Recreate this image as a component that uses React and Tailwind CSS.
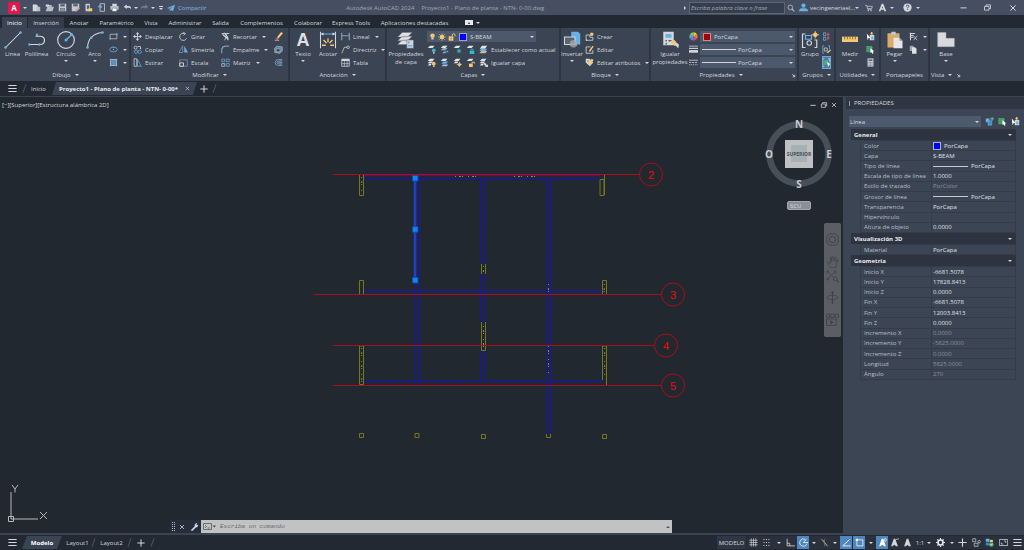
import React from 'react';

// Shared stroke colours: light grey, accent blue, amber
const L = '#d3d7dd';
const B = '#68b1e6';
const Y = '#f4c973';

// --- ICONS (all on a 12x12 grid) ---
const ICONS = {
  newFile: <><path d="M1 2h5l2 2v7H1z" fill={L} /><path d="M6 5h5v6H6z" fill="#b9bec6" /></>,
  open: <><path d="M1 2h4l1 1h3v2H1z" fill={L} /><path d="M3 5h9l-2 6H1z" fill="#b9bec6" /></>,
  save: <><path d="M1 1h10v10H1z" fill="#c4c8cf" /><path d="M3 1.500h6v3H3zM3 6.500h6v4H3z" fill="#59616f" /><path d="M4 8h4M4 9.500h4" stroke={L} strokeWidth=".8" /></>,
  saveAs: <><path d="M1 1h10v7l-3 3H1z" fill="#c4c8cf" /><path d="M3 1.500h6v3H3z" fill="#59616f" /><path d="M5 11l5-5 2 1-4 4z" fill="#d98b8f" /></>,
  webOpen: <><path d="M2 1h6v10H2z" fill="#c4c8cf" /><path d="M4 3h3v5H4z" fill="#59616f" /><path d="M6 7h5v4H6z" fill={Y} /></>,
  webSave: <><path d="M4 1h6v10H4z" fill="none" stroke={L} /><path d="M1 5h5M4 3l2 2-2 2" fill="none" stroke={B} strokeWidth="1.500" /></>,
  print: <><path d="M3 1h6v3H3z" fill={L} /><path d="M.500 4h11v5H.500z" fill="#b9bec6" /><path d="M3 7h6v4H3z" fill="#fff" stroke="#59616f" strokeWidth=".6" /></>,
  undo: <path d="M5 2L1 5l4 3V6.200h3.500q1.500.3 2 2.300Q11.500 4 7.500 3.900H5z" fill={L} />,
  redo: <path d="M7 2l4 3-4 3V6.200H3.500Q2 6.500 1.500 8.500.500 4 4.500 3.900H7z" fill="#747d8d" />,
  plane: <path d="M0 6l12-5-3 10-3-2-2 2V7.500L9 4 2.500 7z" fill={B} />,
  search: <><circle cx="5" cy="5" r="3.500" fill="none" stroke="#b9bec6" strokeWidth="1.200" /><path d="M7.500 7.500L11 11" stroke="#b9bec6" strokeWidth="1.600" /></>,
  user: <><circle cx="6" cy="3.500" r="2.800" fill={B} /><path d="M0 11q0-4 4-4h4q4 0 4 4z" fill={B} /></>,
  cart: <><path d="M0 2h2.500l1.500 6h6M3 3.500h8L10 7H4" fill="none" stroke={L} /><circle cx="5" cy="10" r="1" fill={L} /><circle cx="9" cy="10" r="1" fill={L} /></>,
  autodesk: <path d="M1 11L5 1h2l4 10H8.500L6 4.500 5 7h2.500v2H4l-.8 2z" fill={L} />,
  help: <><circle cx="6" cy="6" r="5.500" fill={L} /><path d="M4.300 4.700q0-1.900 1.800-1.900t1.800 1.600Q7.800 5.500 6.200 6v1.300M6.200 8.300v1.200" fill="none" stroke="#464f61" strokeWidth="1.300" /></>,
  minimize: <path d="M2 6.500h8" stroke={L} strokeWidth="1.300" />,
  restore: <path d="M2 4.500h6v5H2zM4 4.500v-2h6v5H8" fill="none" stroke={L} strokeWidth="1.100" />,
  close: <path d="M2 2l8 8M10 2l-8 8" stroke={L} strokeWidth="1.500" />,
  plus: <path d="M6 .500v11M.500 6h11" stroke={L} strokeWidth="1.500" />,
  menu: <path d="M.500 2h11M.500 6h11M.500 10h11" stroke={L} strokeWidth="1.500" />,
  line: <><path d="M1 11L11 1" stroke={L} strokeWidth=".7" /><circle cx="1" cy="11" r=".9" fill={B} /><circle cx="11" cy="1" r=".9" fill={B} /></>,
  polyline: <><path d="M1 9h7q3 0 3-2.800T7.500 3.500H5" fill="none" stroke={L} strokeWidth=".8" /><circle cx="1" cy="9" r=".8" fill={B} /><circle cx="7.500" cy="9" r=".8" fill={B} /><circle cx="6" cy="2.500" r=".8" fill={B} /></>,
  circle: <><circle cx="6" cy="6" r="5" fill="none" stroke={L} strokeWidth=".7" /><path d="M6 6l3.200-3" stroke={B} strokeWidth=".8" /><circle cx="6" cy="6" r=".9" fill={B} /><circle cx="9.300" cy="2.700" r=".9" fill={B} /></>,
  arc: <><path d="M1 11Q1.500 2 11 1" fill="none" stroke={L} strokeWidth=".7" /><circle cx="1" cy="11" r=".9" fill={B} /><circle cx="3.500" cy="4.500" r=".9" fill={B} /><circle cx="11" cy="1" r=".9" fill={B} /></>,
  rect: <><path d="M1.500 3h9v6h-9z" fill="none" stroke={L} strokeWidth=".9" /><circle cx="10.500" cy="3" r="1.200" fill={B} /><circle cx="1.500" cy="9" r="1.200" fill={B} /></>,
  ellipse: <><ellipse cx="6" cy="6" rx="5" ry="3.200" fill="none" stroke={B} strokeWidth="1" /><circle cx="6" cy="6" r="1" fill={B} /><circle cx="6" cy="2.800" r=".9" fill={B} /></>,
  hatch: <><path d="M2 2h8v8H2z" fill="#5e87ab" stroke={L} strokeWidth=".9" /><path d="M3 9l6-6M3 6l3-3M6 9l3-3" stroke={B} strokeWidth=".7" /><path d="M1 1h2v2H1zM9 1h2v2H9zM1 9h2v2H1zM9 9h2v2H9z" fill={B} /></>,
  move: <><path d="M6 2v8M2 6h8" stroke={L} strokeWidth="1.100" /><path d="M6 0l2.300 3H3.700zM6 12l2.300-3H3.700zM0 6l3-2.300v4.600zM12 6L9 3.700v4.600z" fill={L} /></>,
  copy: <><circle cx="3.500" cy="3.500" r="2" fill="none" stroke={L} /><circle cx="4" cy="9" r="2.200" fill="none" stroke={B} /><circle cx="9" cy="9" r="2.200" fill="none" stroke={B} /><path d="M6 2h4v3M9 4l1 1 1-1" fill="none" stroke={L} /></>,
  stretch: <><path d="M1.500 1v10H5V1z" fill="none" stroke={L} /><path d="M6 2l5 9H6z" fill="none" stroke={B} /></>,
  rotate: <path d="M10 8.500A4.800 4.800 0 1 1 7.500 2M5.500 0l3 2-2.500 2.500" fill="none" stroke={L} strokeWidth="1.100" />,
  mirror: <><path d="M5 1v9H0z" fill="none" stroke="#8a93a1" /><path d="M7 1v9h5z" fill={B} /></>,
  scale: <><path d="M1 2.500h10V11H1z" fill="none" stroke="#7f95ad" /><path d="M1 6.500h5V11H1z" fill="none" stroke={L} strokeWidth="1.200" /></>,
  trim: <><path d="M1 2h10M8 2L5 11" stroke={L} strokeWidth="1.100" /><path d="M2 3l8 7M4 1l5 6v4" fill="none" stroke={L} strokeWidth="1.400" /></>,
  fillet: <><path d="M1 11V6q0-4.500 5-4.500h5" fill="none" stroke={L} strokeWidth=".9" /><path d="M1 6q0-4.500 5-4.500" fill="none" stroke={B} strokeWidth="1.200" /></>,
  array: <><path d="M1 1.500h4v3.500H1zM7 1.500h4v3.500H7zM7 7.500h4V11H7z" fill="none" stroke={B} strokeWidth=".9" /><path d="M1 7.500h4V11H1z" fill="none" stroke={L} strokeWidth=".9" /></>,
  erase: <><path d="M4 7L9.500 0 12 1.800 6 8.500z" fill={Y} /><path d="M4 7l2 1.500L4.500 10.500 2 9z" fill="#e2575b" /><path d="M1 11h6" stroke={L} /></>,
  explode: <><path d="M1 4l3-2.500 7 1V8L8 11 1 10z" fill="#5d86a6" stroke={L} strokeWidth=".7" /><path d="M3 5h5v4H3z" fill="#3b4453" stroke={L} strokeWidth=".6" /></>,
  offset: <><path d="M11 2H6q-4.500 0-4.500 4T6 10h5M11 6H6" fill="none" stroke={B} /><path d="M11 4H6.500Q4 4.500 4 6t2.500 2H11" fill="none" stroke={L} strokeWidth=".8" /></>,
  dimension: <><path d="M1 .500v11M11 .500v11" stroke={L} strokeWidth=".7" /><path d="M1 2h10" stroke={B} strokeWidth=".7" /><path d="M1 2l2-1v2zM11 2L9 1v2z" fill={L} /><path d="M6 5v2.500M3 6l2 2M9 6L7 8M2 9.500h2.500M10 9.500H7.500" stroke={Y} strokeWidth=".9" /></>,
  linear: <><path d="M1 1v10M11 1v10" stroke={L} strokeWidth=".9" /><path d="M1 5h10" stroke={B} strokeWidth="1.200" /></>,
  leader: <><path d="M1 11L4.500 3H8" fill="none" stroke={L} /><circle cx="9.500" cy="3" r="1.700" fill="none" stroke={L} /></>,
  table: <><path d="M1 1.500h10v9.500H1z" fill="none" stroke={L} /><path d="M1 1.500h10V4H1z" fill={L} /><path d="M1 7.500h10M4.500 4v7M8 4v7" stroke={L} strokeWidth=".8" /></>,
  layerProps: <><path d="M3.500 1h6.500L7 4H.500zM3.500 3.500h6.500L7 6.500H.500zM3.500 6h6.500L7 9H.500z" fill="#e0e2e5" stroke="#6b7380" strokeWidth=".3" /><path d="M6.500 6H11v5.500H6.500z" fill="#cfd4da" stroke="#59616f" strokeWidth=".3" /><path d="M7.200 7h1.300v1.300H7.200zM7.200 9.300h3v1h-3z" fill={B} /></>,
  bulb: <><circle cx="6" cy="4.500" r="3.800" fill={Y} /><path d="M4 8h4v3H4z" fill="#d8d5c8" /></>,
  sun: <><circle cx="6" cy="6" r="3.300" fill={Y} /><path d="M6 0v12M0 6h12M1.800 1.800l8.400 8.400M10.200 1.800l-8.400 8.400" stroke={Y} strokeWidth=".9" /></>,
  unlock: <><path d="M1 5h7v6.500H1z" fill={Y} /><path d="M6.500 5V3q0-2 2-2t2 2v2" fill="none" stroke={Y} strokeWidth="1.300" /><path d="M4 7h1.300v2.500H4z" fill="#59616f" /></>,
  layerOff: <><path d="M4 1h6L7.500 4H1z" fill="#e0e2e5" /><circle cx="9" cy="7" r="2.500" fill="#38b9c9" /><path d="M8 9.500h2v2H8z" fill={L} /></>,
  layerIso: <><path d="M4 1h6L7.500 4H1z" fill="#e0e2e5" /><path d="M4 4h6L7.500 7H1z" fill="#9ba7b5" /><path d="M5 8.500h4L7.500 11H3zM9 7.500h2v2H9z" fill={B} /></>,
  layerFreeze: <><path d="M4 1h6L7.500 4H1z" fill="#e0e2e5" /><path d="M8 5v6M5 8h6M6 6l4 4M10 6l-4 4" stroke="#38b9c9" strokeWidth="1.100" /></>,
  layerLock: <><path d="M4 1h6L7.500 4H1z" fill="#e0e2e5" /><path d="M5 7.500h6V12H5z" fill="#38b9c9" /><path d="M6.500 7.500V5.500h3v2" fill="none" stroke="#38b9c9" /></>,
  layerCurrent: <><path d="M4 1h7L8 5H1z" fill="#e0e2e5" /><path d="M3 5h8L8.500 8H.500z" fill={B} /><path d="M3 8h8l-2.500 3H.500z" fill="#d1b990" /></>,
  layerOn: <><path d="M4 1h6L7.500 4H1zM3 4.500h5L6 7H1zM3 7.500h3L5 10H1z" fill="#e0e2e5" /><circle cx="9" cy="7.500" r="2.500" fill={Y} /><path d="M8 10h2v2H8z" fill={Y} /></>,
  layerUniso: <><path d="M4 1h6L7.500 4H1z" fill="#e0e2e5" /><path d="M4 4.500h7L8.500 7.500H2z" fill={B} /><path d="M4 8.500h7L9 11H2z" fill="#9fc4e0" /></>,
  layerThaw: <><path d="M4 1h6L7.500 4H1zM3 4.500h4L6 7H1z" fill="#e0e2e5" /><circle cx="8.500" cy="8.500" r="2" fill={Y} /><path d="M8.500 5v7M5 8.500h7" stroke={Y} strokeWidth=".9" /></>,
  layerUnlock: <><path d="M4 1h6L7.500 4H1z" fill="#e0e2e5" /><path d="M4 7.500h5V12H4z" fill={Y} /><path d="M8 7.500v-2h3v2" fill="none" stroke={Y} strokeWidth="1.200" /></>,
  layerMatch: <><path d="M4 1h6L7.500 4H1zM3 4.500h5L6 7H1zM3 7.500h4L5 10H1z" fill="#e0e2e5" /><path d="M6 7l2-1 2 3h2v3H9z" fill={L} /><path d="M9 9l3 3" stroke={Y} /></>,
  insert: <><path d="M5.500.500h4.500l1.500 1.500v7H5.500z" fill={B} /><path d="M1 4h7v5H1z" fill="#5b6472" stroke={L} strokeWidth=".7" /><circle cx="7" cy="8.500" r="2.500" fill="#a5a9af" opacity=".8" /></>,
  blockNew: <><path d="M1.500 4h5v3h4v4h-9z" fill="none" stroke={L} strokeWidth="1.100" /><circle cx="9" cy="3" r="2.300" fill={Y} /><circle cx="2" cy="11" r="1" fill={L} /></>,
  blockEdit: <><path d="M1.500 2.500h6M1.500 2.500v8.500h9V7" fill="none" stroke={L} strokeWidth="1.100" /><path d="M5 8l5-7 1.500 1L7 9z" fill={Y} /></>,
  attrEdit: <><path d="M1 1h5l5 5-4.500 5L1 6z" fill={L} /><path d="M4 7l5-6 2.500 1.500L7 9z" fill={Y} /><circle cx="4" cy="4" r="1" fill="#d9484f" /></>,
  matchProps: <><path d="M1.500.500h7v9h-7z" fill="#d4d7db" /><path d="M3 2h4v2.500H3z" fill={B} /><path d="M3 6h1v1H3zM5 6h2v1H5zM3 8h1v1H3z" fill="#59616f" /><path d="M6 7l3 3 2-1.500L9 6z" fill={Y} /><path d="M9 9l2.500 2.500L12 9l-1.500-1z" fill={L} /></>,
  wheel: <><path d="M6 6V.500A5.500 5.500 0 0 1 10.800 3.300z" fill="#f5c33b" /><path d="M6 6l4.800-2.700A5.500 5.500 0 0 1 10.800 8.700z" fill="#ef7a3a" /><path d="M6 6l4.800 2.700A5.500 5.500 0 0 1 6 11.500z" fill="#e0468f" /><path d="M6 6v5.500A5.500 5.500 0 0 1 1.200 8.700z" fill="#8e6ce0" /><path d="M6 6L1.200 8.700A5.500 5.500 0 0 1 1.200 3.300z" fill="#3fb5e0" /><path d="M6 6L1.200 3.300A5.500 5.500 0 0 1 6 .500z" fill="#7fce55" /></>,
  weights: <><path d="M0 1.500h12" stroke={L} /><path d="M0 4.500h12" stroke={L} strokeWidth="1.500" /><path d="M0 8.500h12" stroke={L} strokeWidth="3.500" /></>,
  ltypes: <><path d="M0 3h12" stroke={L} /><path d="M0 6h12" stroke={L} strokeDasharray="3 1" /><path d="M0 9h12" stroke={L} strokeDasharray="1.500 1" /></>,
  group: <><path d="M3 2H1v9h2M9 6h1.500v5H9" fill="none" stroke={L} strokeWidth=".8" /><path d="M3 3h4v2.500H3z" fill="none" stroke={B} strokeWidth=".8" /><circle cx="5.500" cy="8" r="1.500" fill="none" stroke={L} strokeWidth=".7" /><circle cx="9.500" cy="2.500" r="1.500" fill={Y} /><path d="M9.500 0v5M7 2.500h5" stroke={Y} strokeWidth=".6" /></>,
  ungroup: <><path d="M2 1h3v4H2zM2 7h3v4H2z" fill="none" stroke={B} /><path d="M8 1v10M7 3h3M7 8h3" stroke="#e2575b" strokeWidth="1.300" /></>,
  groupEdit: <><path d="M3 1H1v10h2M8 1h2v5" fill="none" stroke={B} /><path d="M3 4h4v4H3z" fill="none" stroke={L} /><path d="M6 10l5-4 1 1-4 4z" fill={Y} /></>,
  groupSel: <><path d="M3 1H1v10h2M8 1h2v4" fill="none" stroke={L} /><path d="M3 3h5v6H3z" fill="#4bb475" /><path d="M7 5l5 4H9.500L8 12z" fill="#fff" /></>,
  measure: <><path d="M0 3.500h12v4H0z" fill={Y} /><path d="M2 3.500v2M4 3.500v2M6 3.500v2M8 3.500v2M10 3.500v2" stroke="#6f5b2a" strokeWidth=".6" /></>,
  quickSel: <><path d="M5 4h6v7H5z" fill={L} /><path d="M1 2l5 6H3.500L2 11z" fill="#fff" /><path d="M7 0L5.500 3h2L6 6l4-4H8l1-2z" fill={Y} /><path d="M7 6h3v4H7z" fill={B} /></>,
  selAll: <><path d="M1 2h7v7H1z" fill="#3f9a66" stroke="#6ad08f" strokeDasharray="1.500 1" /><path d="M6 4l5 4.500H9L10 11l-1.500.5-1-2L6 10.500z" fill="#fff" /></>,
  calc: <><path d="M2 .500h8v11H2z" fill="#c4c8cf" /><path d="M3.500 2h5v2h-5z" fill="#59616f" /><path d="M3.500 6h5M3.500 8h5M3.500 10h5" stroke="#59616f" strokeDasharray="1 1" /></>,
  paste: <><path d="M1 1.500h8V11H1z" fill="#d9ac68" /><path d="M3.500.500h3v2h-3z" fill="#c4c8cf" /><path d="M5 4.500h4l2 2v5H5z" fill="#e5e6e8" /><path d="M9 4.500v2h2" fill="#8a93a1" /></>,
  cutTxt: <><path d="M1 2h7M1 4.500h5M1 7h5M2 1v10" stroke={L} strokeWidth="1.300" /><path d="M6 5l5 6M11 5l-5 6" stroke={L} /></>,
  copyClip: <><path d="M1 1h5v7H1z" fill="#9ba3af" /><path d="M4 3h4l2 2v6.500H4z" fill="#dfe1e4" /></>,
  base: <path d="M1 1.500h5V5h5v5H1z" fill="#d9dadd" stroke="#a9adb4" strokeWidth=".3" />,
  wrench: <path d="M1 11l5-5q-.500-3 2-4.500L10 1 8.500 3l.7 1L11 3.500q0 3-3.500 4L3 12z" fill={L} />,
  addSel: <><path d="M1 2h5v5H1z" fill={B} /><path d="M4 5h5v6H4z" fill="#4a8fc8" stroke={B} strokeWidth=".7" /><path d="M9.500 0v5M7 2.500h5" stroke="#63c77d" strokeWidth="1.300" /></>,
  grid: <path d="M3 .500v11M6 .500v11M9 .500v11M.500 3h11M.500 6h11M.500 9h11" stroke={L} strokeWidth=".9" />,
  dots: <path d="M2 2h8M2 6h8M2 10h8" stroke={L} strokeWidth="1.300" strokeDasharray="1.300 2" />,
  ortho: <path d="M1.500 1v9.500H12M1.500 7h3.500v3.500" fill="none" stroke={L} strokeWidth="1.100" />,
  polar: <><path d="M10.500 7.500A4.800 4.800 0 1 1 8 1.700" fill="none" stroke="#fff" /><path d="M6 6h6M6 6l4-5" stroke="#fff" /></>,
  iso: <><path d="M3 2l7 9" stroke={L} strokeWidth="1.100" /><path d="M6 1v10" stroke="#58a06a" strokeWidth=".8" /><path d="M1 1l5 6" stroke="#c85a5a" strokeWidth=".9" /></>,
  angle: <path d="M11.500 10.500H1L10 2" fill="none" stroke="#fff" strokeWidth="1.100" />,
  osnap: <><path d="M2.500 2.500h8v8h-8z" fill="none" stroke="#fff" /><path d="M1 1h3v3H1z" fill="#fff" /></>,
  anno: <><path d="M5 1h2l3.500 10H8L6 9l-3 2H1.500z" fill={L} /><path d="M8 2l4-1" stroke={L} /></>,
  annoScale: <path d="M5 1h2l3.500 10H8L6 9l-2 2H1.500z" fill={L} />,
  annoOn: <><path d="M5 1h2l3.500 10H8L6 9l-3 2H1.500z" fill="#fff" /><circle cx="9.500" cy="2.500" r="1.700" fill="none" stroke="#fff" /></>,
  gear: <><circle cx="6" cy="6" r="3.300" fill="none" stroke="#e6e8eb" strokeWidth="2.200" /><path d="M6 0v2.500M6 9.500V12M0 6h2.500M9.500 6H12M1.800 1.800l1.700 1.700M8.500 8.500l1.700 1.700M10.200 1.800L8.500 3.500M3.500 8.500l-1.700 1.700" stroke="#e6e8eb" strokeWidth="1.600" /></>,
  isolate: <><path d="M1 1h4v4H1zM3 7h5v4H3z" fill="none" stroke={L} strokeWidth=".9" /><circle cx="9.500" cy="5" r="1.700" fill="none" stroke={L} strokeWidth=".9" /></>,
  perf: <><path d="M1 1h5v4H1z" fill={B} /><path d="M1 6h5v4H1z" fill="#3f7fd0" /><path d="M6.500 2.500h4v3h-4z" fill={Y} /><circle cx="8.500" cy="8.500" r="3" fill="#4fae62" /><path d="M7 8.500l1.200 1.200L10 7.500" fill="none" stroke="#fff" /></>,
  clean: <><path d="M.500 2h11v8H.500z" fill="none" stroke={L} /><path d="M6.500 4H9v2.500M5.500 8H3V6" fill="none" stroke={L} /></>,
  navWheel: <><rect x=".700" y=".700" width="10.600" height="10.600" rx="4" fill="none" stroke="#3d4147" strokeWidth=".7" /><circle cx="6" cy="6" r="3" fill="none" stroke="#3d4147" strokeWidth=".8" /></>,
  hand: <path d="M4 11.500L1 7l1-.700L4 8V2.500h1V6l.500-4.500h1L7 6l1-4h1v4.500L10.500 4l1 .500L9.500 9v2.500z" fill="none" stroke="#3d4147" strokeWidth=".6" />,
  zoomExt: <><path d="M1 1l6 6M9 1L1 9M1 3V1h2M9 3V1H7M1 7v2h2" fill="none" stroke="#3d4147" strokeWidth=".7" /><circle cx="8.500" cy="8" r="1.800" fill="none" stroke="#3d4147" strokeWidth=".7" /><path d="M10 9.500l2 2" stroke="#3d4147" /></>,
  orbit: <><ellipse cx="6" cy="6" rx="5" ry="2" fill="none" stroke="#3d4147" strokeWidth=".7" /><path d="M6 .500v11M4.800 2L6 .500 7.200 2M4.800 10L6 11.500 7.200 10" fill="none" stroke="#3d4147" strokeWidth=".8" /></>,
  motion: <><path d="M.500 1h3v3h-3zM4.500 1h3v3h-3zM8.500 1h3v3h-3zM.500 5.500h9v6h-9z" fill="none" stroke="#3d4147" strokeWidth=".7" /><path d="M4 6.500l3 2-3 2z" fill="#3d4147" /></>,
  launcher: <path d="M3 3l5 5M9 4v5H4" fill="none" stroke={L} strokeWidth="2" />,
};

function Icon({ name, className = 'size-[9px]' }) {
  return (
    <svg viewBox="0 0 12 12" className={`shrink-0 ${className}`} aria-hidden="true">
      {ICONS[name]}
    </svg>
  );
}

function Caret({ className = '' }) {
  return (
    <svg viewBox="0 0 4 2" className={`h-[2px] w-[4px] shrink-0 ${className}`} aria-hidden="true">
      <path d="M0 0h4L2 2z" fill="#d3d7dd" />
    </svg>
  );
}

// --- TITLE BAR ---
const QUICK = ['newFile', 'open', 'save', 'saveAs', 'webOpen', 'webSave', 'print', 'undo'];

function TitleBar() {
  return (
    <header className="flex h-[15px] items-center justify-between bg-[#464f61]">
      <div className="flex items-center">
        <button aria-label="AutoCAD" className="ml-[8px] grid size-[12px] place-items-center rounded-[1px] bg-[#e4174b] text-[8px] leading-none font-bold text-white">A</button>
        <Caret className="mr-[3px] ml-[3px]" />
        {QUICK.map((name) => (
          <button key={name} aria-label={name} className="grid w-[13px] place-items-center"><Icon name={name} /></button>
        ))}
        <Caret />
        <button aria-label="redo" className="ml-px grid w-[11px] place-items-center"><Icon name="redo" /></button>
        <Caret className="ml-px" />
        <button aria-label="Personalizar" className="mx-[4px] border-t border-[#d3d7dd] pt-[1px]"><Caret /></button>
        <button className="flex items-center gap-[3px] text-[#77b9e8]"><Icon name="plane" className="size-[8px]" />Compartir</button>
      </div>
      <h1 className="flex gap-[7px] text-[#a0a7b4]">
        <span>Autodesk AutoCAD 2024</span>
        <span>Proyecto1 - Plano de planta - NTN- 0-00.dwg</span>
      </h1>
      <div className="flex items-center">
        <span className="h-0 w-0 border-y-2 border-l-2 border-y-transparent border-l-[#d3d7dd]" />
        <input aria-label="Buscar" placeholder="Escriba palabra clave o frase" className="ml-[3px] h-[12px] w-[96px] border border-[#5d6678] bg-[#353e4d] px-[1px] italic outline-none placeholder:text-[#a2a9b5]" />
        <button aria-label="Buscar" className="ml-[2px]"><Icon name="search" className="size-[8px]" /></button>
        <button className="ml-[4px] flex items-center gap-[2px]"><Icon name="user" /><span className="w-[43px] text-left">vecingeneriael...</span><Caret /></button>
        <button aria-label="Tienda" className="ml-[6px]"><Icon name="cart" className="size-[8px]" /></button>
        <button aria-label="Autodesk" className="ml-[5px] flex items-center gap-[3px]"><Icon name="autodesk" /><Caret /></button>
        <button aria-label="Ayuda" className="ml-[9px] flex items-center gap-[4px]"><Icon name="help" /><Caret /></button>
        <button aria-label="Minimizar" className="ml-[39px]"><Icon name="minimize" /></button>
        <button aria-label="Restaurar" className="ml-[15px]"><Icon name="restore" /></button>
        <button aria-label="Cerrar" className="mr-[7px] ml-[17px]"><Icon name="close" className="size-[8px]" /></button>
      </div>
    </header>
  );
}

// --- RIBBON TABS ---
const TABS = [
  ['Inicio', 'w-[25px] bg-[#3b4453] text-white mr-px'],
  ['Inserción', 'w-[36px] bg-[#343c4a]'],
  ['Anotar', 'w-[30px]'],
  ['Paramétrico', 'w-[45px]'],
  ['Vista', 'w-[24px]'],
  ['Administrar', 'w-[44px]'],
  ['Salida', 'w-[27px]'],
  ['Complementos', 'w-[55px]'],
  ['Colaborar', 'w-[38px]'],
  ['Express Tools', 'w-[48px]'],
  ['Aplicaciones destacadas', 'w-[79px]'],
];

function RibbonTabs() {
  return (
    <nav className="flex h-[13px] items-end pl-[2px]">
      {TABS.map(([label, cls]) => (
        <button key={label} className={`h-[11px] shrink-0 whitespace-nowrap ${cls}`}>{label}</button>
      ))}
      <button aria-label="Minimizar cinta" className="ml-[11px] flex h-[11px] items-center gap-[3px]">
        <span className="grid h-[5px] w-[8px] place-items-center bg-[#e6e8eb]"><span className="h-0 w-0 border-x border-b-2 border-x-transparent border-b-[#222933]" /></span>
        <Caret />
      </button>
    </nav>
  );
}

// --- RIBBON BUILDING BLOCKS ---
function Panel({ title, width, launcher, noCaret, children }) {
  return (
    <section className={`flex shrink-0 flex-col border-r-2 border-[#2e3643] pt-[2px] ${width}`}>
      <div className="flex h-[39px]">{children}</div>
      <div className="flex h-[12px] items-center">
        <h2 className="flex flex-1 items-center justify-center gap-[4px]">{title}{!noCaret && <Caret />}</h2>
        {launcher && <button aria-label={`${title}: opciones`} className="mr-px"><Icon name="launcher" className="size-[5px]" /></button>}
      </div>
    </section>
  );
}

function Big({ icon, label, width, caret, iconClass = 'size-[18px]' }) {
  return (
    <button className={`flex shrink-0 flex-col items-center ${width}`}>
      <span className="grid h-[20px] place-items-center">
        {icon === 'A' ? <span className="font-['Liberation_Sans',sans-serif] text-[18px] leading-[20px] font-bold text-[#dfe1e4]">A</span> : <Icon name={icon} className={iconClass} />}
      </span>
      <span className="text-center leading-[8px] whitespace-pre">{label}</span>
      {caret && <Caret className="mt-[2px]" />}
    </button>
  );
}

function Small({ icon, label, caret, active }) {
  return (
    <button aria-label={label ? undefined : icon} className={`flex h-[13px] items-center gap-[3px] whitespace-nowrap ${active ? 'bg-[#4a7ba6] outline -outline-offset-1 outline-[#6fa6d2]' : ''}`}>
      <Icon name={icon} />
      {label}
      {caret && <Caret className="ml-[2px]" />}
    </button>
  );
}

function Combo({ label, options, pad, width, children }) {
  return (
    <div className={`relative ${width}`}>
      <select aria-label={label} className={`block h-[11px] w-full appearance-none bg-[#4c586c] outline-none ${pad}`}>
        {options.map((o) => <option key={o}>{o}</option>)}
      </select>
      <span className="pointer-events-none absolute inset-y-0 left-[2px] flex items-center gap-[2px]">{children}</span>
      <Caret className="pointer-events-none absolute top-[5px] right-[2px]" />
    </div>
  );
}

function Ribbon() {
  return (
    <div className="flex h-[53px] overflow-hidden bg-[#3b4453] pl-[2px]">
      <Panel title="Dibujo" width="w-[129px]">
        <Big icon="line" label="Línea" width="w-[21px]" />
        <Big icon="polyline" label="Polilínea" width="w-[27px]" />
        <Big icon="circle" label="Círculo" width="w-[32px]" caret iconClass="size-[20px]" />
        <Big icon="arc" label="Arco" width="w-[25px]" caret />
        <div className="ml-[2px]">
          <Small icon="rect" caret />
          <Small icon="ellipse" caret />
          <Small icon="hatch" caret />
        </div>
      </Panel>
      <Panel title="Modificar" width="w-[159px]">
        <div className="ml-[2px] w-[46px]">
          <Small icon="move" label="Desplazar" />
          <Small icon="copy" label="Copiar" />
          <Small icon="stretch" label="Estirar" />
        </div>
        <div className="w-[42px]">
          <Small icon="rotate" label="Girar" />
          <Small icon="mirror" label="Simetría" />
          <Small icon="scale" label="Escala" />
        </div>
        <div className="w-[53px]">
          <Small icon="trim" label="Recortar" caret />
          <Small icon="fillet" label="Empalme" caret />
          <Small icon="array" label="Matriz" caret />
        </div>
        <div>
          <Small icon="erase" />
          <Small icon="explode" />
          <Small icon="offset" />
        </div>
      </Panel>
      <Panel title="Anotación" width="w-[97px]">
        <Big icon="A" label="Texto" width="w-[26px]" caret />
        <Big icon="dimension" label="Acotar" width="w-[24px]" />
        <div className="ml-[1px]">
          <Small icon="linear" label="Lineal" caret />
          <Small icon="leader" label="Directriz" caret />
          <Small icon="table" label="Tabla" />
        </div>
      </Panel>
      <Panel title="Capas" width="w-[174px]">
        <Big icon="layerProps" label={'Propiedades\nde capa'} width="w-[38px]" />
        <div className="ml-[2px]">
          <div className="flex h-[13px] items-center">
            <Combo label="Capa actual" options={['S-BEAM', '0', 'S-COLS']} pad="pl-[43px]" width="w-[109px]">
              <Icon name="bulb" className="size-[7px]" />
              <Icon name="sun" className="size-[8px]" />
              <Icon name="unlock" className="size-[8px]" />
              <span className="ml-px size-[8px] border border-[#9aa2c8] bg-[#0000ff]" />
            </Combo>
          </div>
          <div className="flex gap-[4px]">
            <Small icon="layerOff" /><Small icon="layerIso" /><Small icon="layerFreeze" /><Small icon="layerLock" />
            <Small icon="layerCurrent" label="Establecer como actual" />
          </div>
          <div className="flex gap-[4px]">
            <Small icon="layerOn" /><Small icon="layerUniso" /><Small icon="layerThaw" /><Small icon="layerUnlock" />
            <Small icon="layerMatch" label="Igualar capa" />
          </div>
        </div>
      </Panel>
      <Panel title="Bloque" width="w-[90px]">
        <Big icon="insert" label="Insertar" width="w-[22px]" caret />
        <div className="ml-[2px]">
          <Small icon="blockNew" label="Crear" />
          <Small icon="blockEdit" label="Editar" />
          <Small icon="attrEdit" label="Editar atributos" caret />
        </div>
      </Panel>
      <Panel title="Propiedades" width="w-[148px]" launcher>
        <Big icon="matchProps" label={'Igualar\npropiedades'} width="w-[38px]" />
        <div className="mr-[2px]">
          <Small icon="wheel" />
          <Small icon="weights" />
          <Small icon="ltypes" />
        </div>
        <div className="flex flex-col gap-[2px] pt-[1px]">
          <Combo label="Color de objeto" options={['PorCapa', 'PorBloque']} pad="pl-[14px]" width="w-[95px]">
            <span className="ml-px size-[8px] border border-[#c98a8f] bg-[#a80000]" />
          </Combo>
          <Combo label="Grosor de línea" options={['PorCapa', 'PorBloque']} pad="pl-[38px]" width="w-[95px]">
            <span className="h-px w-[34px] bg-[#d3d7dd]" />
          </Combo>
          <Combo label="Tipo de línea" options={['PorCapa', 'Continuous']} pad="pl-[38px]" width="w-[95px]">
            <span className="h-px w-[34px] bg-[#d3d7dd]" />
          </Combo>
        </div>
      </Panel>
      <Panel title="Grupos" width="w-[37px]">
        <Big icon="group" label="Grupo" width="w-[22px]" />
        <div className="ml-[1px]">
          <Small icon="ungroup" />
          <Small icon="groupEdit" />
          <Small icon="groupSel" active />
        </div>
      </Panel>
      <Panel title="Utilidades" width="w-[45px]">
        <Big icon="measure" label="Medir" width="w-[28px]" caret iconClass="size-[16px]" />
        <div className="ml-[2px]">
          <Small icon="quickSel" />
          <Small icon="selAll" />
          <Small icon="calc" />
        </div>
      </Panel>
      <Panel title="Portapapeles" width="w-[49px]" noCaret>
        <Big icon="paste" label="Pegar" width="w-[27px]" caret />
        <div className="ml-px">
          <Small icon="cutTxt" caret />
          <Small icon="copyClip" caret />
        </div>
      </Panel>
      <section className="flex w-[34px] flex-col pt-[2px]">
        <div className="flex h-[39px]"><Big icon="base" label="Base" width="w-[32px]" caret iconClass="size-[20px]" /></div>
        <div className="flex h-[12px] items-center gap-[4px] pl-[1px]"><h2>Vista</h2><Caret /><button aria-label="Vista: opciones"><Icon name="launcher" className="size-[5px]" /></button></div>
      </section>
    </div>
  );
}

// --- TABS FOR FILES AND LAYOUTS ---
function Slash() {
  return <span className="h-[9px] w-px shrink-0 rotate-[20deg] bg-[#4a5363]" />;
}

function FileTabs() {
  return (
    <nav className="flex h-[15px] items-center">
      <button aria-label="Menú de archivos" className="ml-[8px]"><Icon name="menu" /></button>
      <span className="w-[7px]" /><Slash />
      <button className="w-[27px]">Inicio</button>
      <div className="flex h-[13px] items-center bg-[#3b4453] pr-[4px] pl-[7px] [clip-path:polygon(4px_0,100%_0,calc(100%-4px)_100%,0_100%)]">
        <button className="w-[124px] text-left font-bold whitespace-nowrap text-[#e8eaed]">Proyecto1 - Plano de planta - NTN- 0-00*</button>
        <button aria-label="Cerrar pestaña" className="ml-[2px] pr-[3px]"><Icon name="close" className="size-[5px]" /></button>
      </div>
      <button aria-label="Nuevo dibujo" className="mr-[6px] ml-[3px]"><Icon name="plus" className="size-[8px]" /></button>
      <Slash />
    </nav>
  );
}

// --- DRAWING ---
const AXES = [
  { n: '2', y: 174.5, x1: 333, cx: 651 },
  { n: '3', y: 294.5, x1: 314, cx: 673 },
  { n: '4', y: 345.5, x1: 333, cx: 666 },
  { n: '5', y: 385.5, x1: 333, cx: 673 },
];

function Plan() {
  return (
    <svg viewBox="0 97 843 436" className="absolute inset-0 h-full w-full" role="img" aria-label="Plano de planta">
      {/* beams */}
      <g fill="none" stroke="#1414b8" strokeWidth="1" shapeRendering="crispEdges">
        <path d="M364 178.500H415M419 178.500H481.500M485.500 178.500H547M551 178.500H600" />
        <path d="M364 290.500H415M419 290.500H481.500M485.500 290.500H547M551 290.500H603" />
        <path d="M364 380.500H415M419 380.500H481.500M485.500 380.500H547M551 380.500H603" />
        <path d="M418.500 178V385M415.500 284V385" />
        <path d="M481.500 178V264M485.500 178V264M481.500 274V322M485.500 274V322M481.500 351V381M485.500 351V381" />
        <path d="M546.500 178V434M550.500 178V434" />
      </g>
      <g fill="none" stroke="#1b1b8a" strokeWidth="1" strokeDasharray="1 4 2 7 1 3">
        <path d="M364 177H600M364 292.300H602M368 382.500H602M420 180V384M483.500 180V380M548.500 180V430" />
      </g>
      <path d="M364 175.500H600" stroke="#5a1070" strokeWidth="1" />
      {/* columns */}
      <g fill="none" stroke="#77771c" strokeWidth="1">
        <path d="M359.500 175v20.500h4V175M359.500 294v-13.500h4V294M359.500 346h4v38.500h-4zM600 179.500h4v16h-4zM604.500 175v20M602.500 294v-13.500h4V294M602.500 380V346h4v39" />
        <path d="M481.500 264v10M485.500 264v10M481.500 322v28.500h4V322" />
        <path d="M359.500 433.500h4v4h-4zM415 433.500h4v4h-4zM481.500 434.500h4v4h-4zM546.500 434v3.500h4V434M602.500 434.500h4v4h-4z" />
        <path d="M361.700 177v16M361.700 348v34M604.700 348v30M604.300 284v8M483.500 326v22M483.500 266v6M548.500 346v30M548.500 284v10M455 176.500h26M514 176.500h24" strokeDasharray="1 3 2 1 1 5" stroke="#8d8d35" />
      </g>
      {/* axes with their bubbles */}
      {AXES.map((a) => (
        <g key={a.n}>
          <path d={`M${a.x1} ${a.y}H${a.cx - 12}`} stroke="#ad0c18" strokeWidth="1" shapeRendering="crispEdges" />
          <circle cx={a.cx} cy={a.y} r="11.500" fill="none" stroke="#ad0c18" />
          <text x={a.cx} y={a.y + 4} textAnchor="middle" fill="#f00a0a" className="font-['Liberation_Sans',sans-serif] text-[11px]">{a.n}</text>
        </g>
      ))}
      {/* selected beam */}
      <path d="M415 178V281" stroke="#1f3fd2" strokeWidth="2.600" />
      <g fill="#0a84ff" stroke="#1a4d8a" strokeWidth=".8">
        <path d="M412.500 175.500h5.500v5.500h-5.500zM412.500 226.700h5.500v5.500h-5.500zM412.500 277.500h5.500v5.500h-5.500z" />
      </g>
    </svg>
  );
}

function ViewCube() {
  return (
    <div className="absolute top-[20px] right-[10px] flex w-[68px] flex-col items-center">
      <svg viewBox="0 0 68 76" className="w-full" role="img" aria-label="Vista superior">
        <circle cx="34" cy="37" r="29.500" fill="none" stroke="#474f59" strokeWidth="6.500" />
        <path d="M20 23h28v28H20z" fill="#bfc0c1" />
        <path d="M26 28h16v17H26z" fill="#a6b1b6" />
        <text x="34" y="39" textAnchor="middle" fill="#4b4f55" className="text-[5px] font-bold">SUPERIOR</text>
        <g fill="#c9ccd1" textAnchor="middle" className="text-[10px] font-bold">
          <text x="34" y="11">N</text>
          <text x="34" y="71">S</text>
          <text x="4" y="41">O</text>
          <text x="64" y="41">E</text>
        </g>
      </svg>
      <button className="mt-[8px] flex h-[9px] w-[24px] items-center rounded-[2px] border border-[#a3a7b0] bg-[#8b8f9a] pl-[2px] text-[#d7d9de]">SCU</button>
    </div>
  );
}

function NavBar() {
  return (
    <div className="absolute top-[126px] right-[2px] flex h-[114px] w-[17px] flex-col items-center rounded-[2px] bg-[#5b5f65] pt-[10px]">
      <button aria-label="Rueda"><Icon name="navWheel" className="size-[13px]" /></button>
      <button aria-label="Encuadre" className="mt-[9px]"><Icon name="hand" className="size-[13px]" /></button>
      <button aria-label="Zoom" className="mt-[2px]"><Icon name="zoomExt" className="size-[13px]" /></button>
      <button aria-label="Órbita" className="mt-[8px]"><Icon name="orbit" className="size-[13px]" /></button>
      <button aria-label="ShowMotion" className="mt-[9px]"><Icon name="motion" className="size-[13px]" /></button>
    </div>
  );
}

function Canvas() {
  return (
    <main className="relative flex-1 overflow-hidden bg-[#212830]">
      <Plan />
      <button className="absolute top-[4px] left-[2px] text-[#d3d7dd]">[−][Superior][Estructura alámbrica 2D]</button>
      <div className="absolute top-[4px] right-[6px] flex items-center gap-[3px]">
        <button aria-label="Minimizar dibujo"><Icon name="minimize" className="size-[8px]" /></button>
        <button aria-label="Restaurar dibujo"><Icon name="restore" className="size-[8px]" /></button>
        <button aria-label="Cerrar dibujo"><Icon name="close" className="size-[6px]" /></button>
      </div>
      <ViewCube />
      <NavBar />
      <svg viewBox="0 0 42 42" className="absolute bottom-[7px] left-[7px] size-[42px]" role="img" aria-label="Ejes X Y">
        <path d="M4 8V35H31M1.500 32.500h5v5h-5zM5 1l3 4 3-4M8 5v3.500M33 28l7 7M40 28l-7 7" fill="none" stroke="#b5b8bd" strokeWidth="1" />
      </svg>
      <form className="absolute bottom-0 left-[170px] flex h-[13px] w-[502px] items-center bg-[#262e3c]">
        <span className="mx-[2px] h-[9px] w-[3px] border-x border-dotted border-[#b5b8bd]" />
        <button type="button" aria-label="Cerrar" className="ml-[2px]"><Icon name="close" className="size-[6px]" /></button>
        <button type="button" aria-label="Personalizar" className="ml-[5px]"><Icon name="wrench" /></button>
        <label className="ml-[2px] flex h-full flex-1 items-center bg-[#c1c2c3] px-[2px]">
          <svg viewBox="0 0 13 7" className="h-[7px] w-[13px]" aria-hidden="true"><path d="M.500.500h8v6h-8zM2 2l1.500 1.500L2 5M4.500 5h2.500" fill="none" stroke="#555a61" strokeWidth=".8" /><path d="M9.500 2.500h3.500l-1.700 2z" fill="#444950" /></svg>
          <input aria-label="Comando" placeholder="Escriba un comando" className="ml-[4px] flex-1 bg-transparent font-['Liberation_Mono',monospace] text-[6px] italic outline-none placeholder:text-[#686b70]" />
          <span className="h-0 w-0 border-x-2 border-b-2 border-x-transparent border-b-[#555a61]" />
        </label>
      </form>
    </main>
  );
}

// --- PROPERTIES PALETTE ---
const GROUPS = [
  {
    title: 'General',
    height: 'h-[93px]',
    rows: [
      ['Color', 'PorCapa', 'swatch'],
      ['Capa', 'S-BEAM'],
      ['Tipo de línea', 'PorCapa', 'line'],
      ['Escala de tipo de línea', '1.0000'],
      ['Estilo de trazado', 'PorColor', 'dim'],
      ['Grosor de línea', 'PorCapa', 'line'],
      ['Transparencia', 'PorCapa'],
      ['Hipervínculo', ''],
      ['Altura de objeto', '0.0000'],
    ],
  },
  { title: 'Visualización 3D', height: 'h-[11px]', rows: [['Material', 'PorCapa']] },
  {
    title: 'Geometría',
    height: 'h-[114px]',
    rows: [
      ['Inicio X', '-6681.5078'],
      ['Inicio Y', '17828.8413'],
      ['Inicio Z', '0.0000'],
      ['Fin X', '-6681.5078'],
      ['Fin Y', '12003.8413'],
      ['Fin Z', '0.0000'],
      ['Incremento X', '0.0000', 'dim'],
      ['Incremento Y', '-5825.0000', 'dim'],
      ['Incremento Z', '0.0000', 'dim'],
      ['Longitud', '5825.0000', 'dim'],
      ['Ángulo', '270', 'dim'],
    ],
  },
];

function PropertyGroup({ title, height, rows }) {
  return (
    <section>
      <button className="flex h-[11px] w-full items-center justify-between bg-[#2e343f] pr-[4px] pl-[3px] font-bold text-[#e8eaed]">{title}<Caret /></button>
      <table className={`ml-[9px] w-[calc(100%-9px)] border-collapse ${height}`}>
        <tbody>
          {rows.map(([label, value, kind]) => (
            <tr key={label} className="border border-[#343c49]">
              <th scope="row" className="w-[71px] border-r border-[#343c49] p-0 pl-[3px] text-left font-normal whitespace-nowrap text-[#b9bfc9]">
                <label htmlFor={`${title}-${label}`}>{label}</label>
              </th>
              <td className="p-0 pl-[1px]">
                <div className="flex h-[8px] items-center">
                  {kind === 'swatch' && <span className="mr-[3px] size-[8px] shrink-0 border border-[#aab0d8] bg-[#0000ff]" />}
                  {kind === 'line' && <span className="mr-[3px] h-px w-[35px] shrink-0 bg-[#c5cad2]" />}
                  <input id={`${title}-${label}`} defaultValue={value} readOnly={kind === 'dim'} className={`h-[8px] w-full min-w-0 bg-transparent outline-none ${kind === 'dim' ? 'text-[#87909e]' : 'text-[#dfe2e7]'}`} />
                </div>
              </td>
            </tr>
          ))}
        </tbody>
      </table>
    </section>
  );
}

function Properties() {
  return (
    <aside className="w-[181px] shrink-0 bg-[#3c4554] pl-[3px]">
      <div className="flex h-[12px] items-center bg-[#2f3541]">
        <span className="mx-[3px] h-[5px] w-px bg-[#8a93a1]" />
        <h2 className="ml-[1px]">PROPIEDADES</h2>
      </div>
      <div className="mt-[7px] flex items-center pl-[3px]">
        <div className="relative w-[132px]">
          <select aria-label="Objeto seleccionado" className="block h-[11px] w-full appearance-none bg-[#4d5a6e] pl-[1px] outline-none"><option>Línea</option></select>
          <Caret className="pointer-events-none absolute top-[5px] right-[2px]" />
        </div>
        <div className="ml-[4px] flex gap-[4px]">
          <button aria-label="Añadir"><Icon name="addSel" /></button>
          <button aria-label="Designar objetos"><Icon name="selAll" /></button>
          <button aria-label="Selección rápida"><Icon name="quickSel" /></button>
        </div>
      </div>
      <div className="mt-[2px] mr-[8px] ml-[5px]">
        {GROUPS.map((g) => <PropertyGroup key={g.title} {...g} />)}
      </div>
    </aside>
  );
}

// --- STATUS BAR ---
const STATUS = [
  ['grid', 'w-[13px]'], ['dots', 'w-[13px]'], ['caret', 'w-[11px]'],
  ['ortho', 'w-[13px]'], ['polar', 'w-[12px] bg-[#4f86bd]'], ['caret', 'w-[9px]'],
  ['iso', 'w-[12px]'], ['caret', 'w-[10px]'],
  ['angle', 'w-[12px] bg-[#4f86bd] mr-px'], ['osnap', 'w-[12px] bg-[#4f86bd]'], ['caret', 'w-[11px]'],
  ['annoOn', 'w-[12px] bg-[#4f86bd]'], ['anno', 'w-[13px]'], ['annoScale', 'w-[13px]'],
  ['1:1', 'w-[12px]'], ['caret', 'w-[6px]'],
  ['gear', 'w-[16px]'], ['caret', 'w-[7px]'], ['plus', 'w-[14px]'],
  ['isolate', 'w-[14px]'], ['perf', 'w-[13px]'], ['clean', 'w-[15px]'], ['menu', 'w-[13px]'],
];

function StatusBar() {
  return (
    <footer className="flex h-[17px] items-center justify-between border-t-2 border-[#3b4453]">
      <nav className="flex items-center">
        <button aria-label="Menú de presentaciones" className="ml-[8px]"><Icon name="menu" /></button>
        <button className="ml-[5px] h-[13px] w-[40px] bg-[#3b4453] font-bold text-white [clip-path:polygon(5px_0,100%_0,calc(100%-5px)_100%,0_100%)]">Modelo</button>
        <button className="w-[31px]">Layout1</button>
        <Slash />
        <button className="w-[35px]">Layout2</button>
        <Slash />
        <button aria-label="Nueva presentación" className="mx-[7px]"><Icon name="plus" className="size-[8px]" /></button>
        <Slash />
      </nav>
      <div className="flex h-[13px] items-stretch">
        <button className="mr-px w-[29px] bg-[#2f3744]">MODELO</button>
        {STATUS.map(([name, cls], i) => (
          <button key={i} aria-label={name} className={`grid shrink-0 place-items-center ${cls.includes('bg-') ? '' : 'bg-[#2a313c]'} ${cls}`}>
            {name === 'caret' ? <Caret /> : name === '1:1' ? '1:1' : <Icon name={name} />}
          </button>
        ))}
      </div>
    </footer>
  );
}

export default function App() {
  return (
    <div className="flex min-h-screen flex-col bg-[#222933] font-['Open_Sans','Noto_Sans',sans-serif] text-[6px] leading-[8px] text-[#d3d7dd]">
      <TitleBar />
      <RibbonTabs />
      <Ribbon />
      <FileTabs />
      <div className="flex flex-1 border-t border-[#3b4453]">
        <Canvas />
        <Properties />
      </div>
      <StatusBar />
    </div>
  );
}
